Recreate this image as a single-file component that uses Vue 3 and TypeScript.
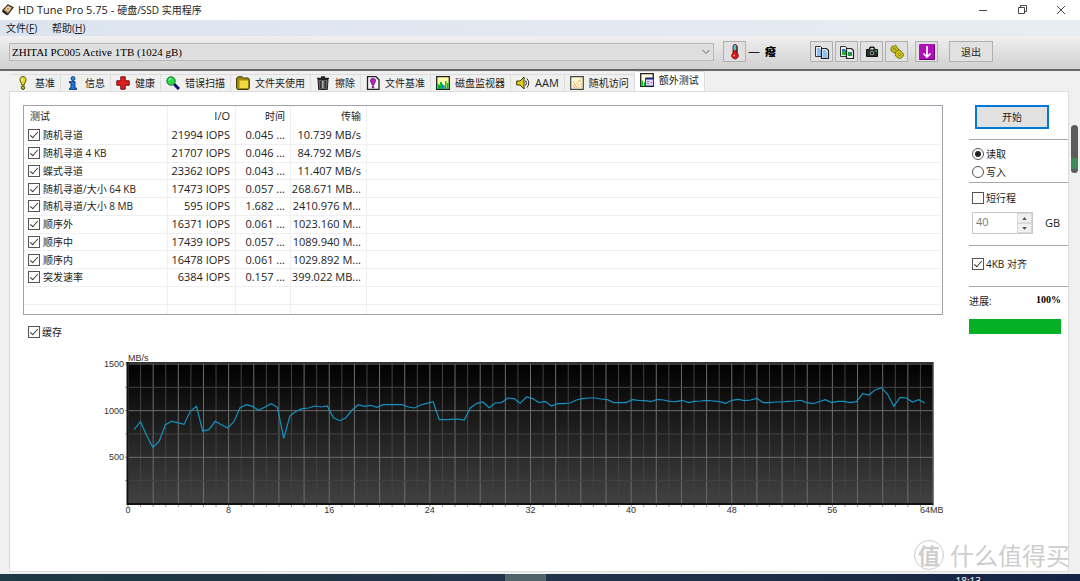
<script setup lang="ts">
import { ref } from 'vue'

interface Test {
  name: string
  io: string
  time: string
  rate: string
  on: boolean
}

const tests = ref<Test[]>([
  { name: '随机寻道', io: '21994 IOPS', time: '0.045 ...', rate: '10.739 MB/s', on: true },
  { name: '随机寻道 4 KB', io: '21707 IOPS', time: '0.046 ...', rate: '84.792 MB/s', on: true },
  { name: '蝶式寻道', io: '23362 IOPS', time: '0.043 ...', rate: '11.407 MB/s', on: true },
  { name: '随机寻道/大小 64 KB', io: '17473 IOPS', time: '0.057 ...', rate: '268.671 MB...', on: true },
  { name: '随机寻道/大小 8 MB', io: '595 IOPS', time: '1.682 ...', rate: '2410.976 M...', on: true },
  { name: '顺序外', io: '16371 IOPS', time: '0.061 ...', rate: '1023.160 M...', on: true },
  { name: '顺序中', io: '17439 IOPS', time: '0.057 ...', rate: '1089.940 M...', on: true },
  { name: '顺序内', io: '16478 IOPS', time: '0.061 ...', rate: '1029.892 M...', on: true },
  { name: '突发速率', io: '6384 IOPS', time: '0.157 ...', rate: '399.022 MB...', on: true },
])

const tabs = [
  { id: 'bench', label: '基准' },
  { id: 'info', label: '信息' },
  { id: 'health', label: '健康' },
  { id: 'scan', label: '错误扫描' },
  { id: 'folder', label: '文件夹使用' },
  { id: 'erase', label: '擦除' },
  { id: 'filebench', label: '文件基准' },
  { id: 'monitor', label: '磁盘监视器' },
  { id: 'aam', label: 'AAM' },
  { id: 'random', label: '随机访问' },
  { id: 'extra', label: '额外测试' },
]
const active = ref('extra')
const mode = ref('read')
const cache = ref(true)
const shortStroke = ref(false)
const align = ref(true)
const capacity = ref('40')

// Cache transfer speed in MB/s, sampled evenly over the block size range
const speeds = [
  800, 882, 732, 607, 671, 850, 886, 871, 853, 993, 1046, 782, 796, 886, 850, 814,
  879, 1032, 1064, 1046, 1004, 1039, 1075, 1036, 704, 943, 993, 1021, 1029, 1050, 1039, 1050,
  925, 893, 925, 1007, 1064, 1046, 1057, 1036, 1064, 1064, 1064, 1064, 1039, 1029, 1061, 1079,
  1096, 904, 904, 907, 911, 900, 1029, 1079, 1093, 1032, 1082, 1086, 1136, 1129, 1079, 1146,
  1129, 1086, 1100, 1050, 1075, 1075, 1082, 1114, 1129, 1136, 1136, 1125, 1118, 1086, 1086, 1086,
  1118, 1111, 1107, 1096, 1121, 1114, 1100, 1096, 1111, 1086, 1100, 1104, 1111, 1104, 1096, 1079,
  1111, 1121, 1107, 1114, 1132, 1086, 1086, 1093, 1093, 1100, 1104, 1111, 1086, 1075, 1096, 1118,
  1086, 1100, 1100, 1086, 1096, 1182, 1168, 1221, 1246, 1175, 1046, 1143, 1136, 1093, 1118, 1082,
]
const plot = { left: 105, right: 910, top: 14, bottom: 154 }
const px = (mb: number) => plot.left + ((plot.right - plot.left) * mb) / 64
const py = (v: number) => plot.bottom - ((plot.bottom - plot.top) * v) / 1500
const line = speeds.map((v, i) => `${px((i + 1) * 0.495).toFixed(1)},${py(v).toFixed(1)}`).join(' ')
const columns = Array.from({ length: 65 }, (_, i) => i)
const levels = [250, 500, 750, 1000, 1250, 1500]
const xLabels = [0, 8, 16, 24, 32, 40, 48, 56]
const yLabels = [500, 1000, 1500]
</script>

<template>
  <div class="window">
    <header class="titlebar">
      <svg class="app-icon" viewBox="0 0 14 14">
        <path d="M1 7 7 1l6 3-6 8z" fill="#c99860" stroke="#2c2420" stroke-width="1.2" />
        <circle cx="7" cy="5.500" r="2.600" fill="#f0d4a8" />
        <circle cx="7" cy="5.500" r=".8" fill="#55402c" />
        <path d="m1 7 6 5-1 1.500L0 9z" fill="#1c1c1c" />
      </svg>
      <h1><span class="latin">HD Tune Pro 5.75 - </span>硬盘/SSD 实用程序</h1>
      <div class="window-buttons">
        <button type="button" aria-label="最小化">
          <svg viewBox="0 0 10 10"><path d="M1 5.500h8" /></svg>
        </button>
        <button type="button" aria-label="还原">
          <svg viewBox="0 0 10 10"><path d="M1.500 2.500h6v6h-6zM3.500 2.500v-2h6v6h-2" /></svg>
        </button>
        <button type="button" aria-label="关闭">
          <svg viewBox="0 0 10 10"><path d="m1 1 8 8M9 1 1 9" /></svg>
        </button>
      </div>
    </header>

    <nav class="menubar">
      <button type="button">文件(<u>F</u>)</button>
      <button type="button">帮助(<u>H</u>)</button>
    </nav>

    <div class="toolbar">
      <div class="drive">
        <select aria-label="驱动器">
          <option>ZHITAI PC005 Active 1TB (1024 gB)</option>
        </select>
        <svg viewBox="0 0 8 8"><path d="m.5 2 3.500 3.500L7.500 2" fill="none" stroke="#666" /></svg>
      </div>
      <button type="button" class="tool" aria-label="温度">
        <svg viewBox="0 0 16 16">
          <path d="M6 2.500a2 2 0 0 1 4 0V9a3.300 3.300 0 1 1-4 0z" fill="#d81818" stroke="#600" stroke-width=".8" />
          <path d="M6.500 2.500a1.500 1.500 0 0 1 3 0V6h-3z" fill="#3cd0d8" />
          <path d="M10 2v7" stroke="#222" />
          <circle cx="7" cy="11.500" r="1" fill="#ff9a90" />
        </svg>
      </button>
      <span class="temp"><span>—</span><b>癈</b></span>
      <div class="tools">
        <button type="button" class="tool" aria-label="复制文本">
          <svg viewBox="0 0 16 16">
            <path d="M1.500 2.500h5l2 2v8h-7z" fill="#dfefff" stroke="#333" />
            <path d="M3 5h3M3 7h4M3 9h4M3 11h4" stroke="#3c8fe0" />
            <path d="M7.500 4.500h5l2 2v8h-7z" fill="#dfefff" stroke="#222" stroke-width="1.200" />
            <path d="M9 7h3M9 9h4M9 11h4M9 13h4" stroke="#3c8fe0" />
          </svg>
        </button>
        <button type="button" class="tool" aria-label="复制图像">
          <svg viewBox="0 0 16 16">
            <path d="M1.500 2.500h5l2 2v8h-7z" fill="#e8f4e8" stroke="#333" />
            <path d="M3 6h4v5H3z" fill="#28b030" />
            <path d="M7.500 4.500h5l2 2v8h-7z" fill="#e8f4e8" stroke="#222" stroke-width="1.200" />
            <path d="M9 8h4v4H9z" fill="#20a030" />
            <path d="M10 8h3v2h-3zM3 5h3v2H3z" fill="#3070c0" />
          </svg>
        </button>
        <button type="button" class="tool" aria-label="截图">
          <svg viewBox="0 0 16 16">
            <path d="M2.500 5.500h2.500l1-2.500h4l1 2.500h2.500v7h-11z" fill="#2a2e2c" stroke="#111" />
            <path d="M6.500 4h3v1.500h-3z" fill="#ddd" />
            <circle cx="8" cy="9" r="2.200" fill="#8c9490" />
            <circle cx="8" cy="9" r="1.200" fill="#222" />
            <path d="M11.500 7h1.500" stroke="#2ee060" stroke-width="1.500" />
          </svg>
        </button>
        <button type="button" class="tool" aria-label="选项">
          <svg viewBox="0 0 16 16" fill="#c8c010" stroke="#6b6600" stroke-width=".8">
            <path d="m2 4 1.500-2L5 2.300 6.500 1l1.500 2 1.500 2L9 7 7 9 4.500 8.500 2 7z" />
            <path d="m6 9 2-2.500 2.500-.5 2 1.500L14.500 10l-.5 2.500-2.500 2-2.500-.5L6.500 12z" />
            <circle cx="5.500" cy="5" r="1" fill="#eeeed0" />
            <circle cx="10.500" cy="10.500" r="1" fill="#eeeed0" />
          </svg>
        </button>
      </div>
      <button type="button" class="tool" aria-label="最小化到托盘">
        <svg viewBox="0 0 16 16">
          <rect width="16" height="16" rx="1" fill="#b010b8" />
          <path d="M.5 15.500h15V.5" fill="none" stroke="#6c0074" />
          <path d="M8 2v11M4.500 9.500 8 13l3.500-3.500" fill="none" stroke="#fff" stroke-width="1.700" />
        </svg>
      </button>
      <button type="button" class="exit">退出</button>
    </div>

    <div class="tabs" role="tablist">
      <button
        v-for="tab in tabs"
        :key="tab.id"
        type="button"
        role="tab"
        class="tab"
        :class="{ active: active === tab.id }"
        :aria-selected="active === tab.id"
        @click="active = tab.id"
      >
        <svg viewBox="0 0 14 14">
          <template v-if="tab.id === 'bench'">
            <path d="M7 .6c2 0 3 1.200 3 3 0 2-1.500 3-1.700 5.400H5.700C5.500 6.600 4 5.600 4 3.600c0-1.800 1-3 3-3z" fill="#e4dc18" stroke="#55520a" />
            <circle cx="7" cy="11.700" r="1.700" fill="#c8bf10" stroke="#44420a" />
            <path d="M6 2v3" stroke="#fff" />
          </template>
          <template v-else-if="tab.id === 'info'">
            <path d="M4 5.500h5V12h1.500v1.500h-7V12H5V7H3.500V5.500z" fill="#1878e0" stroke="#06265c" stroke-width=".8" />
            <circle cx="7" cy="2.500" r="2" fill="#2090f0" stroke="#06265c" stroke-width=".8" />
          </template>
          <path v-else-if="tab.id === 'health'" d="M4.800.8h4.400v4h4v4.400h-4v4H4.800v-4h-4V4.800h4z" fill="#e02020" stroke="#700c0c" />
          <template v-else-if="tab.id === 'scan'">
            <path d="m8 8 5 5" stroke="#101070" stroke-width="3" />
            <circle cx="5" cy="5" r="4.200" fill="#30d848" stroke="#0c7824" />
            <path d="M2.800 4.500q.5-2 2.500-2" stroke="#d8ffe0" fill="none" />
          </template>
          <template v-else-if="tab.id === 'folder'">
            <path d="M.6 12.500V2L2 .8h4L7.500 2H12l1.300 1v9.500l-1 1H1.500z" fill="#a08c10" stroke="#403800" />
            <path d="M3.500 4.500H12V12H3.500z" fill="#f0d840" />
          </template>
          <template v-else-if="tab.id === 'erase'">
            <path d="M2 3.500h10L11.300 13.500H2.700z" fill="#606060" stroke="#222" />
            <path d="M1 2.500h12M5 1h4" stroke="#222" stroke-width="1.500" />
            <path d="M4.800 5v7M9.200 5v7" stroke="#222" />
            <path d="M6.800 5v7" stroke="#ccc" />
          </template>
          <template v-else-if="tab.id === 'filebench'">
            <path d="M1.500.7h8.500l3 3v9.600H1.500z" fill="#f4f4f4" stroke="#222" stroke-width="1.300" />
            <path d="M7 2.500c2 0 2.600 1 2.600 2.200C9.600 6.500 8 7 8 9H6C6 7 4.400 6.500 4.400 4.700 4.400 3.500 5 2.500 7 2.500z" fill="#b820c0" stroke="#500858" stroke-width=".7" />
            <circle cx="7" cy="11" r="1.300" fill="#a018a8" />
          </template>
          <template v-else-if="tab.id === 'monitor'">
            <path d="M.7.7h12.600v12.600H.7z" fill="#ffffa8" stroke="#222" stroke-width="1.300" />
            <path d="M1.500 8H3v5H1.500zM4 6h2v7H4zM7 9h1.500v4H7zM9 5h1.500v8H9zM11 7h1.500v6H11z" fill="#08c020" />
            <path d="M3 9h1v4H3zM6 8h1v5H6zM8.500 10h1v3h-1z" fill="#1878d0" />
          </template>
          <template v-else-if="tab.id === 'aam'">
            <path d="M.7 5H4l4-4v12L4 9H.7z" fill="#e0d018" stroke="#3c3800" />
            <path d="M9.500 4.500q2 2.500 0 5M11 2.500q3.500 4.500 0 9" fill="none" stroke="#333" />
          </template>
          <template v-else-if="tab.id === 'random'">
            <path d="M.7.7h12.600v12.600H.7z" fill="#fffbd0" stroke="#444" stroke-width="1.200" />
            <path d="M2.500 10h1.200M4 8h1.200M6 11h1.200M6.500 7h1.200M8 9h1.200M9.500 5h1.200M10.500 8h1.200M10.500 3h1.200M3 6h1.200M8 5h1.200" stroke="#f09038" stroke-width="1.200" />
            <path d="M4 11.500h1M8.500 11.500h1M11 10.500h1M5 9.500h1" stroke="#e070b0" />
          </template>
          <template v-else>
            <path d="M.7.7h12.600v12.600H.7z" fill="#fffbd8" stroke="#222" stroke-width="1.300" />
            <path d="M1.500 7.500H3V13H1.500zM4 9h1.500v4H4z" fill="#08c020" />
            <path d="M5.500 5.500h8v7.500h-8z" fill="#d8dcff" stroke="#202050" stroke-width=".8" />
            <path d="M5.500 4.500h8v2h-8z" fill="#102878" />
            <path d="M7 8.500h2M7 10.500h2M10.500 9.500h2" stroke="#e04890" />
          </template>
        </svg>
        <span :class="{ latin: tab.id === 'aam' }">{{ tab.label }}</span>
      </button>
    </div>

    <main class="page">
      <section class="results">
        <div class="list">
          <table>
            <colgroup>
              <col class="c-name" />
              <col class="c-io" />
              <col class="c-time" />
              <col class="c-rate" />
              <col />
            </colgroup>
            <thead>
              <tr><th>测试</th><th class="latin">I/O</th><th>时间</th><th>传输</th><th></th></tr>
            </thead>
            <tbody>
              <tr v-for="t in tests" :key="t.name">
                <td>
                  <label class="check"><input v-model="t.on" type="checkbox" />{{ t.name }}</label>
                </td>
                <td class="num">{{ t.io }}</td>
                <td class="num">{{ t.time }}</td>
                <td class="num">{{ t.rate }}</td>
                <td></td>
              </tr>
              <tr><td></td><td></td><td></td><td></td><td></td></tr>
              <tr class="rest"><td></td><td></td><td></td><td></td><td></td></tr>
            </tbody>
          </table>
        </div>

        <label class="check cache"><input v-model="cache" type="checkbox" />缓存</label>

        <svg class="chart" viewBox="0 0 920 172" role="img" aria-label="缓存传输速率">
          <defs>
            <linearGradient id="plot-fill" x1="0" y1="0" x2="0" y2="1">
              <stop offset="0" stop-color="#000" />
              <stop offset="1" stop-color="#424242" />
            </linearGradient>
          </defs>
          <rect x="104" y="12" width="807" height="143" fill="url(#plot-fill)" />
          <template v-for="c in columns" :key="c">
            <path :d="`M${px(c)} 14V154`" :class="c % 2 ? 'minor' : 'major'" />
            <path :d="`M${px(c)} 155v2`" class="tick" />
          </template>
          <template v-for="l in levels" :key="l">
            <path :d="`M105 ${py(l)}H910`" :class="l % 500 ? 'minor' : 'major'" />
            <path :d="`M102 ${py(l)}h2`" class="tick" />
          </template>
          <path d="M103 12.500H911" stroke="#333" />
          <path d="M104.500 12V155" stroke="#111" stroke-width="2" />
          <path d="M104 154H911" stroke="#111" stroke-width="2" />
          <path d="M910.500 12V155" stroke="#777" />
          <polyline :points="line" fill="none" stroke="#1592c2" stroke-width="1.200" />
          <text x="105" y="11">MB/s</text>
          <text v-for="y in yLabels" :key="y" x="101" :y="py(y) + 3" text-anchor="end">{{ y }}</text>
          <text v-for="x in xLabels" :key="x" :x="px(x)" y="163" text-anchor="middle">{{ x }}</text>
          <text x="897" y="163">64MB</text>
        </svg>
      </section>

      <aside class="options">
        <div class="group start"><button type="button">开始</button></div>
        <div class="group modes">
          <label class="check"><input v-model="mode" type="radio" name="mode" value="read" />读取</label>
          <label class="check"><input v-model="mode" type="radio" name="mode" value="write" />写入</label>
        </div>
        <div class="group stroke">
          <label class="check"><input v-model="shortStroke" type="checkbox" />短行程</label>
          <div class="size">
            <div class="spin">
              <input id="capacity" v-model="capacity" type="text" disabled />
              <div class="arrows">
                <button type="button" disabled aria-label="增加"><svg viewBox="0 0 6 4"><path d="m0 4 3-4 3 4z" /></svg></button>
                <button type="button" disabled aria-label="减少"><svg viewBox="0 0 6 4"><path d="m0 0 3 4 3-4z" /></svg></button>
              </div>
            </div>
            <label for="capacity">GB</label>
          </div>
        </div>
        <div class="group align">
          <label class="check"><input v-model="align" type="checkbox" />4KB 对齐</label>
        </div>
        <div class="progress">
          <div class="caption"><label for="progress">进展:</label><b>100%</b></div>
          <progress id="progress" value="100" max="100"></progress>
        </div>
      </aside>
    </main>

    <footer class="taskbar"><span class="task"></span><time>18:13</time></footer>

    <div class="scroll-thumb"></div>
    <div class="watermark"><span class="seal">值</span><span>什么值得买</span></div>
  </div>
</template>

<style>
body {
  margin: 0;
  background: #f0f0f0;
}
</style>

<style scoped>
.window {
  position: relative;
  display: flex;
  flex-direction: column;
  box-sizing: border-box;
  min-height: 100vh;
  overflow: hidden;
  background: #f0f0f0;
  color: #222;
  font: 10px/16px 'Open Sans', 'Noto Sans CJK SC', sans-serif;
}
button,
input,
select {
  margin: 0;
  padding: 0;
  color: inherit;
  font: inherit;
}
svg {
  display: block;
}
.latin {
  font-size: 11px;
}

.titlebar {
  display: flex;
  align-items: center;
  gap: 4px;
  height: 20px;
  padding-left: 2px;
  background: #fff;
}
.app-icon {
  width: 12px;
  height: 12px;
}
h1 {
  flex: 1;
  margin: 0;
  font-size: 10px;
  font-weight: 400;
  white-space: pre;
}
.window-buttons {
  display: flex;
}
.window-buttons button {
  display: flex;
  align-items: center;
  justify-content: center;
  width: 39px;
  height: 20px;
  border: 0;
  background: none;
}
.window-buttons svg {
  width: 10px;
  height: 10px;
  fill: none;
  stroke: #444;
}

.menubar {
  display: flex;
  gap: 15px;
  height: 16px;
  padding-left: 6px;
  background: linear-gradient(90deg, #dce4ef, #e8edf2);
}
.menubar button {
  border: 0;
  background: none;
}

.toolbar {
  display: flex;
  align-items: center;
  height: 35px;
  box-sizing: border-box;
  padding: 0 87px 2px 9px;
  border-bottom: 2px solid #696969;
  background: linear-gradient(#f0f0f0, #d0d0d0);
}
.drive {
  position: relative;
  flex: 1;
  min-width: 120px;
}
.drive select {
  display: block;
  width: 100%;
  height: 18px;
  padding-left: 2px;
  border: 1px solid #b8b8b8;
  border-radius: 0;
  appearance: none;
  background: #dfdfdf;
  font: 11px/14px 'Liberation Serif', serif;
  color: #000;
}
.drive svg {
  position: absolute;
  top: 5px;
  right: 4px;
  width: 8px;
  height: 8px;
  pointer-events: none;
}
.tool {
  display: flex;
  flex: none;
  align-items: center;
  justify-content: center;
  box-sizing: border-box;
  width: 23px;
  height: 21px;
  border: 1px solid #b0b0b0;
  background: #e1e1e1;
}
.tool svg {
  width: 16px;
  height: 16px;
}
.drive + .tool {
  margin-left: 9px;
}
.temp {
  display: flex;
  gap: 5px;
  width: 62px;
  padding-left: 2px;
  font-size: 12px;
  white-space: nowrap;
}
.temp b {
  font-size: 11px;
  font-weight: 900;
  color: #000;
}
.tools {
  display: flex;
  gap: 2px;
  margin-right: 7px;
}
.exit {
  width: 44px;
  height: 21px;
  margin-left: 11px;
  border: 1px solid #b0b0b0;
  background: #e1e1e1;
}

.tabs {
  display: flex;
  align-items: flex-end;
  height: 20px;
  padding-left: 11px;
}
.tab {
  display: flex;
  flex: none;
  align-items: center;
  gap: 5px;
  height: 17px;
  padding: 0 5px;
  border: solid #dcdcdc;
  border-width: 1px 1px 0 0;
  background: #f0f0f0;
  white-space: nowrap;
}
.tab svg {
  width: 14px;
  height: 14px;
}
.tab.active {
  height: 20px;
  padding-bottom: 3px;
  background: #fff;
}

.page {
  display: flex;
  flex: 1;
  gap: 26px;
  margin: 0 11px 2px 9px;
  padding: 13px 0 0 13px;
  border: 1px solid #dcdcdc;
  background: #fff;
}
.results {
  flex: 1;
  min-width: 0;
}
.list {
  border: 1px solid #a0a2aa;
}
table {
  width: 100%;
  height: 208px;
  border-collapse: separate;
  border-spacing: 0;
  table-layout: fixed;
}
.c-name {
  width: 144px;
}
.c-io {
  width: 68px;
}
.c-time {
  width: 55px;
}
.c-rate {
  width: 76px;
}
th,
td {
  height: 17px;
  box-sizing: border-box;
  padding: 0 5px 0 4px;
  border-right: 1px solid #efefef;
  border-bottom: 1px solid #f0f0f0;
  line-height: 16px;
  text-align: right;
  white-space: nowrap;
}
th {
  height: 21px;
  border-bottom-color: #fff;
  font-weight: 400;
}
th:first-child,
td:first-child {
  text-align: left;
}
th:first-child {
  padding-left: 6px;
}
th:last-child,
td:last-child {
  border-right: 0;
}
.rest td {
  height: 9px;
  border-bottom: 0;
}
td.num {
  padding-left: 0;
  font-size: 11px;
}

.check {
  display: flex;
  align-items: center;
  gap: 3px;
  line-height: 16px;
}
.check input {
  flex: none;
  box-sizing: border-box;
  width: 12px;
  height: 12px;
  border: 1px solid #555;
  appearance: none;
  background: #fff;
}
.check input[type='checkbox']:checked::after {
  content: '';
  display: block;
  box-sizing: border-box;
  width: 4px;
  height: 8px;
  margin: 0 3px;
  border: solid #333;
  border-width: 0 1px 1px 0;
  transform: rotate(42deg);
}
.check input[type='radio'] {
  border-radius: 50%;
}
.check input[type='radio']:checked::after {
  content: '';
  display: block;
  width: 6px;
  height: 6px;
  margin: 2px;
  border-radius: 50%;
  background: #222;
}
.cache {
  width: max-content;
  margin: 9px 0 10px 5px;
  gap: 2px;
}
.chart {
  width: 100%;
  height: auto;
}
.chart text {
  fill: #333;
  font: 9px 'Liberation Sans', sans-serif;
}
.major {
  stroke: #6c6c6c;
}
.minor {
  stroke: #434343;
}
.tick {
  stroke: #999;
}

.options {
  flex: none;
  width: 99px;
}
.group {
  box-sizing: border-box;
  border-bottom: 1px solid #a8a8a8;
  padding-left: 3px;
}
.start {
  height: 35px;
  padding-left: 6px;
}
.start button {
  display: block;
  width: 74px;
  height: 24px;
  border: 2px solid #0078d7;
  background: #e1e1e1;
}
.modes {
  height: 43px;
  padding-top: 5px;
}
.modes .check {
  height: 18px;
}
.options .check {
  gap: 2px;
}
.stroke {
  height: 63px;
  padding-top: 7px;
}
.size {
  display: flex;
  align-items: center;
  gap: 12px;
  margin-top: 6px;
  font-size: 11px;
}
.spin {
  display: flex;
  box-sizing: border-box;
  width: 61px;
  height: 22px;
  border: 1px solid #c8c8c8;
}
.spin input {
  flex: 1;
  width: 0;
  padding: 0 0 2px 3px;
  border: 0;
  background: #fff;
  color: #777;
}
.arrows {
  display: flex;
  flex-direction: column;
  width: 15px;
}
.arrows button {
  display: flex;
  flex: 1;
  align-items: center;
  justify-content: center;
  min-height: 0;
  border: 1px solid #d8d8d8;
  background: #f0f0f0;
}
.arrows svg {
  width: 5px;
  height: 3px;
  fill: #555;
}
.align {
  height: 41px;
  padding-top: 10px;
}
.progress {
  padding: 5px 7px 0 0;
}
.caption {
  display: flex;
  justify-content: space-between;
  line-height: 18px;
}
.caption b {
  font: bold 10px/16px 'Liberation Serif', serif;
  color: #000;
}
progress {
  display: block;
  width: 100%;
  height: 15px;
  margin-top: 9px;
  border: 0;
  appearance: none;
  background: #06b025;
}
progress::-webkit-progress-bar {
  background: #e6e6e6;
}
progress::-webkit-progress-value {
  background: #06b025;
}

.taskbar {
  display: flex;
  height: 7px;
  overflow: hidden;
  background: linear-gradient(90deg, #1f3a44, #20334a 55%, #172344);
  color: #fff;
  font-size: 10px;
  line-height: 14px;
}
.task {
  flex: none;
  width: 41px;
  margin-left: 46.800%;
  background: #50636b;
}
time {
  margin: 0 99px 0 auto;
}

.scroll-thumb {
  position: absolute;
  top: 125px;
  right: 2px;
  width: 7px;
  height: 48px;
  border-radius: 4px;
  background: linear-gradient(#5c5c5c 68%, #3f8a58 68%, #3f8a58 92%, #5c5c5c 92%);
}
.watermark {
  position: absolute;
  right: 10px;
  bottom: 10px;
  display: flex;
  align-items: center;
  gap: 6px;
  color: #cdcdcd;
  font: 24px/32px 'Noto Sans CJK SC', sans-serif;
}
.seal {
  box-sizing: border-box;
  width: 30px;
  height: 30px;
  border: 1px solid #cdcdcd;
  border-radius: 50%;
  font-size: 22px;
  font-weight: 700;
  line-height: 27px;
  text-align: center;
}
</style>
